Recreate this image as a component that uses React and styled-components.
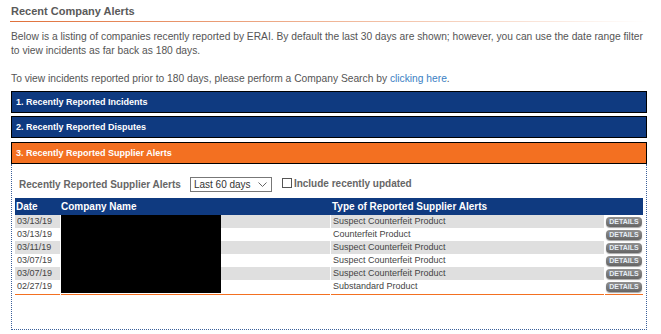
import React from 'react'
import styled, { createGlobalStyle } from 'styled-components'

const GlobalStyle = createGlobalStyle`
  body {
    margin: 0;
    background: #fff;
    font-family: "Liberation Sans", Arial, sans-serif;
  }
`

const Page = styled.div`
  padding: 4px 14px 0 11px;
  width: 636px;
`

const Title = styled.h2`
  margin: 0 0 0 -1px;
  padding: 0 0 4px 1px;
  font-size: 11px;
  line-height: 14px;
  font-weight: bold;
  color: #5a5a5a;
  background: linear-gradient(to right, #e0703a, #f3c2a8 60%, #fff 100%) left bottom / 100% 1px no-repeat;
`

const Intro = styled.p`
  margin: ${(p) => p.$top}px 0 0;
  font-size: 10.25px;
  line-height: 14px;
  color: #555;
`

const Link = styled.a`
  color: #3b7fc4;
  text-decoration: none;
`

const Bars = styled.div`
  margin-top: 5px;
  display: flex;
  flex-direction: column;
`

const Bar = styled.div`
  height: 20px;
  margin-top: ${(p) => p.$gap}px;
  border: 1px solid #000;
  background: ${(p) => (p.$active ? '#f37021' : '#0f3a80')};
  color: #fff;
  font-size: 9px;
  font-weight: bold;
  display: flex;
  align-items: center;
  padding-left: 4px;
`

const Panel = styled.div`
  border: 1px dotted #3a5f9a;
  border-top: none;
  padding: 13px 3px 34px 3px;
`

const Filter = styled.div`
  display: flex;
  align-items: center;
  height: 15px;
  padding-left: 4px;
`

const Label = styled.span`
  font-size: 10px;
  font-weight: bold;
  color: #666;
  margin-right: 9px;
`

const Dropdown = styled.div`
  box-sizing: border-box;
  width: 82px;
  height: 15px;
  border: 1px solid #777;
  display: flex;
  align-items: center;
  justify-content: space-between;
  padding: 0 4px 0 3px;
  font-size: 10px;
  color: #333;
`

const Check = styled.input`
  appearance: none;
  box-sizing: border-box;
  width: 10px;
  height: 10px;
  margin: -3px 2px 0 10px;
  border: 1px solid #555;
  background: #fff;
`

const CheckLabel = styled.label`
  font-size: 10px;
  font-weight: bold;
  color: #666;
  margin-top: -3px;
`

const Table = styled.div`
  margin-top: 6px;
  width: 628px;
`

const cols = '45px 269px 273px 38px'

const HeadRow = styled.div`
  display: grid;
  grid-template-columns: ${cols};
  column-gap: 1px;
  height: 17px;
  align-items: center;
  background: #0f3a80;
  color: #fff;
  font-size: 10px;
  font-weight: bold;
`

const HeadCell = styled.div`
  padding-left: ${(p) => p.$pad}px;
`

const Row = styled.div`
  display: grid;
  grid-template-columns: ${cols};
  column-gap: 1px;
  height: ${(p) => (p.$foot ? 2 : 13)}px;
`

const Cell = styled.div`
  background: ${(p) => (p.$shade ? '#dfdfdf' : 'transparent')};
  font-size: 9px;
  line-height: 13px;
  color: #444;
  padding-left: ${(p) => p.$pad || 0}px;
  white-space: nowrap;
  overflow: hidden;
`

const FootCell = styled.div`
  border-bottom: 1px solid #f37021;
`

const Redacted = styled.span`
  display: block;
  width: 160px;
  height: 13px;
  background: #000;
`

const ButtonCell = styled.div`
  display: flex;
  align-items: center;
  padding-left: 1px;
`

const Details = styled.button`
  width: 36px;
  height: 10px;
  padding: 0;
  border: none;
  border-radius: 4px;
  background: linear-gradient(#909090, #656565);
  box-shadow: 0 1px 1px rgba(0, 0, 0, 0.35);
  color: #e6eef6;
  font-family: "Liberation Sans", Arial, sans-serif;
  font-size: 7px;
  font-weight: bold;
  line-height: 10px;
`

const alerts = [
  ['03/13/19', 'Suspect Counterfeit Product'],
  ['03/13/19', 'Counterfeit Product'],
  ['03/11/19', 'Suspect Counterfeit Product'],
  ['03/07/19', 'Suspect Counterfeit Product'],
  ['03/07/19', 'Suspect Counterfeit Product'],
  ['02/27/19', 'Substandard Product'],
]

function Chevron() {
  return (
    <svg width="9" height="5" viewBox="0 0 9 5">
      <path d="M0.5 0.5 L4.5 4.5 L8.5 0.5" fill="none" stroke="#666" strokeWidth="1" />
    </svg>
  )
}

function App() {
  return (
    <Page>
      <GlobalStyle />
      <Title>Recent Company Alerts</Title>
      <Intro $top={8}>
        Below is a listing of companies recently reported by ERAI. By default the last 30 days are shown; however, you can
        use the date range filter to view incidents as far back as 180 days.
      </Intro>
      <Intro $top={14}>
        To view incidents reported prior to 180 days, please perform a Company Search by <Link href="#">clicking here</Link>.
      </Intro>
      <Bars>
        <Bar $gap={0}>1. Recently Reported Incidents</Bar>
        <Bar $gap={3}>2. Recently Reported Disputes</Bar>
        <Bar $gap={4} $active>3. Recently Reported Supplier Alerts</Bar>
        <Panel>
          <Filter>
            <Label>Recently Reported Supplier Alerts</Label>
            <Dropdown>
              Last 60 days
              <Chevron />
            </Dropdown>
            <Check type="checkbox" id="recent" />
            <CheckLabel htmlFor="recent">Include recently updated</CheckLabel>
          </Filter>
          <Table>
            <HeadRow>
              <HeadCell $pad={1}>Date</HeadCell>
              <HeadCell $pad={0}>Company Name</HeadCell>
              <HeadCell $pad={1}>Type of Reported Supplier Alerts</HeadCell>
              <HeadCell />
            </HeadRow>
            {alerts.map(([date, type], i) => (
              <Row key={i}>
                <Cell $shade={i % 2 === 0} $pad={2}>{date}</Cell>
                <Cell $shade={i % 2 === 0}>
                  <Redacted />
                </Cell>
                <Cell $shade={i % 2 === 0} $pad={2}>{type}</Cell>
                <ButtonCell>
                  <Details>DETAILS</Details>
                </ButtonCell>
              </Row>
            ))}
            <Row $foot>
              <FootCell />
              <FootCell />
              <FootCell />
              <FootCell />
            </Row>
          </Table>
        </Panel>
      </Bars>
    </Page>
  )
}

export default App
